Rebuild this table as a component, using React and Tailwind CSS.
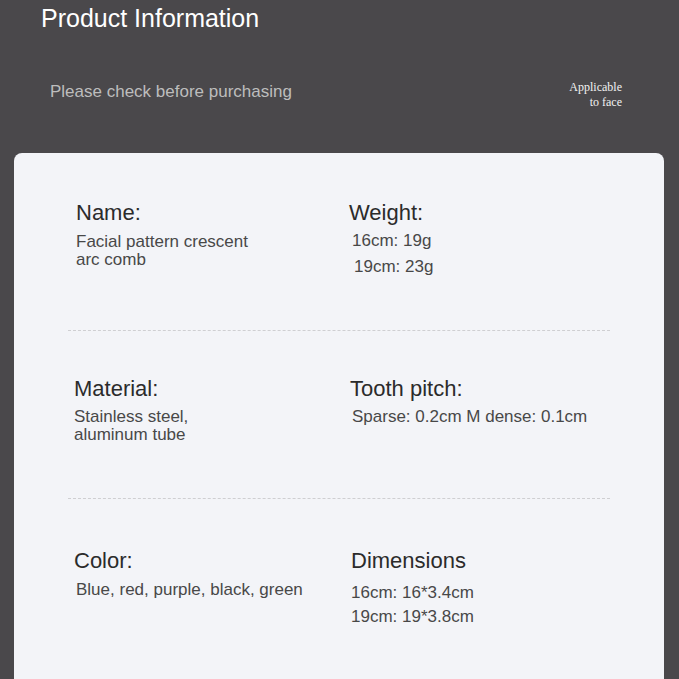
export default function App() {
  const sans = { fontFamily: '"Liberation Sans", Arial, sans-serif' };
  const Row = ({ left, right, pt, h }) => (
    <div className={`grid grid-cols-[275px_1fr] pl-[60px] ${pt} ${h}`}>
      <div>{left}</div>
      <div>{right}</div>
    </div>
  );
  const Head = ({ children, cls = "" }) => (
    <div className={`text-[22px] leading-[26px] text-[#2b2b2b] ${cls}`}>{children}</div>
  );
  const Body = ({ children, cls = "" }) => (
    <div className={`text-[17px] leading-[18px] text-[#484848] ${cls}`}>{children}</div>
  );
  return (
    <div className="w-[679px] h-[679px] overflow-hidden bg-[#4a484b]" style={sans}>
      <div className="h-[153px] relative">
        <div className="pl-[41px] pt-[4px] text-[25px] leading-[29px] text-white">Product Information</div>
        <div className="pl-[50px] pt-[49px] text-[17px] leading-[20px] text-[#bdbdbd]">Please check before purchasing</div>
        <div
          className="absolute right-[57px] top-[80px] text-right text-[12px] leading-[15px] text-[#f2f2f2]"
          style={{ fontFamily: '"Liberation Serif", "Times New Roman", serif' }}
        >
          Applicable
          <br />
          to face
        </div>
      </div>
      <div className="ml-[14px] w-[650px] h-[526px] bg-[#f3f4f8] rounded-t-[8px]">
        <Row
          pt="pt-[47px]"
          h="h-[177px]"
          left={
            <>
              <Head cls="ml-[2px]">Name:</Head>
              <Body cls="mt-[7px] ml-[2px]">
                Facial pattern crescent
                <br />
                arc comb
              </Body>
            </>
          }
          right={
            <>
              <Head>Weight:</Head>
              <Body cls="mt-[6px] ml-[3px]">16cm: 19g</Body>
              <Body cls="mt-[8px] ml-[5px]">19cm: 23g</Body>
            </>
          }
        />
        <div className="ml-[54px] w-[542px] border-t border-dashed border-[#cfcfd2]" />
        <Row
          pt="pt-[45px]"
          h="h-[167px]"
          left={
            <>
              <Head>Material:</Head>
              <Body cls="mt-[6px]">
                Stainless steel,
                <br />
                aluminum tube
              </Body>
            </>
          }
          right={
            <>
              <Head cls="ml-[1px]">Tooth pitch:</Head>
              <Body cls="mt-[6px] ml-[3px]">Sparse: 0.2cm M dense: 0.1cm</Body>
            </>
          }
        />
        <div className="ml-[54px] w-[542px] border-t border-dashed border-[#cfcfd2]" />
        <Row
          pt="pt-[49px]"
          h="h-[150px]"
          left={
            <>
              <Head>Color:</Head>
              <Body cls="mt-[7px] ml-[2px]">Blue, red, purple, black, green</Body>
            </>
          }
          right={
            <>
              <Head cls="ml-[2px]">Dimensions</Head>
              <Body cls="mt-[10px] ml-[2px]">16cm: 16*3.4cm</Body>
              <Body cls="mt-[6px] ml-[2px]">19cm: 19*3.8cm</Body>
            </>
          }
        />
      </div>
    </div>
  );
}
